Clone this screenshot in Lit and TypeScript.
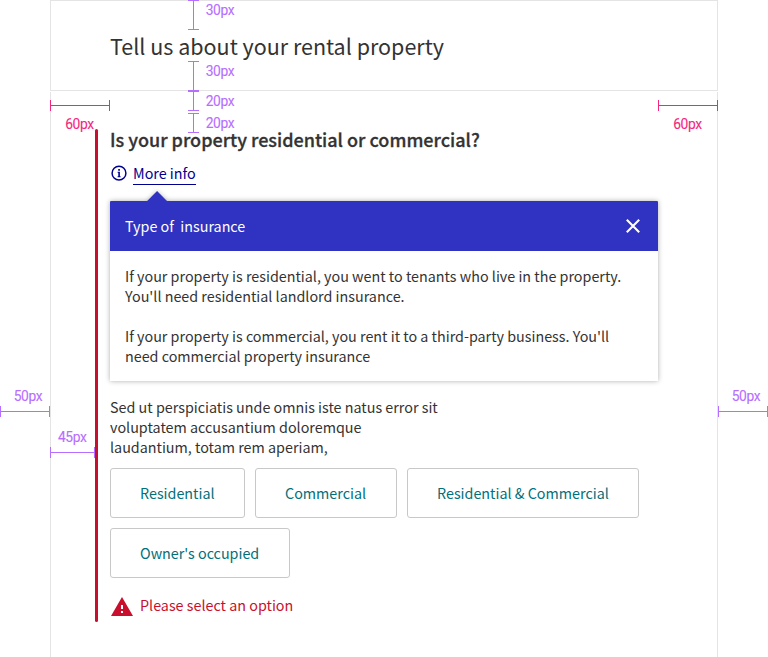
import { LitElement, html, css } from "lit";
import { customElement, property } from "lit/decorators.js";
import { styleMap } from "lit/directives/style-map.js";

type Mark = {
  axis: "h" | "v";
  tone: "violet" | "pink";
  x: number;
  y: number;
  length: number;
  label: string;
  labelX: number;
  labelY: number;
};

/* Spacing annotations laid over the form; x/y is the start of the rule. */
const MARKS: Mark[] = [
  { axis: "v", tone: "violet", x: 193, y: 0, length: 30, label: "30px", labelX: 205.7, labelY: 14 },
  { axis: "v", tone: "violet", x: 193, y: 61, length: 30, label: "30px", labelX: 205.7, labelY: 75 },
  { axis: "v", tone: "violet", x: 193, y: 91, length: 20, label: "20px", labelX: 205.7, labelY: 105 },
  { axis: "v", tone: "violet", x: 193, y: 113, length: 20, label: "20px", labelX: 205.7, labelY: 127 },
  { axis: "h", tone: "pink", x: 50, y: 105, length: 60, label: "60px", labelX: 65.2, labelY: 128 },
  { axis: "h", tone: "pink", x: 658, y: 105, length: 60, label: "60px", labelX: 673.2, labelY: 128 },
  { axis: "h", tone: "violet", x: 0, y: 411, length: 50, label: "50px", labelX: 13.7, labelY: 400 },
  { axis: "h", tone: "violet", x: 718, y: 411, length: 50, label: "50px", labelX: 731.7, labelY: 400 },
  { axis: "h", tone: "violet", x: 50, y: 452, length: 45, label: "45px", labelX: 58, labelY: 441 },
];

@customElement("spacing-mark")
class SpacingMark extends LitElement {
  @property({ attribute: false }) mark!: Mark;

  static styles = css`
    :host { display: contents; }
    .violet { color: #b76eff; }
    .pink { color: #f5267f; }
    .rule, .label { position: absolute; }
    .rule { box-sizing: border-box; }
    .rule::before { content: ""; position: absolute; background: currentColor; }
    .v { width: 11px; border-top: 1px solid; border-bottom: 1px solid; }
    .v::before { left: 5px; top: 0; bottom: 0; width: 1px; }
    .h { height: 11px; border-left: 1px solid; border-right: 1px solid; }
    .h::before { top: 5px; left: 0; right: 0; height: 1px; }
    .label { font: 13.8px/14px Roboto, sans-serif; letter-spacing: -0.4px; white-space: nowrap; -webkit-text-stroke: 0.1px; }
  `;

  render() {
    const m = this.mark;
    const vertical = m.axis === "v";
    const rule = {
      left: `${vertical ? m.x - 5 : m.x}px`,
      top: `${vertical ? m.y : m.y - 5}px`,
      [vertical ? "height" : "width"]: `${m.length}px`,
    };
    return html`
      <div class="rule ${m.axis} ${m.tone}" style=${styleMap(rule)}></div>
      <span class="label ${m.tone}" style=${styleMap({ left: `${m.labelX}px`, top: `${m.labelY - 11}px` })}>${m.label}</span>
    `;
  }
}

@customElement("info-tooltip")
class InfoTooltip extends LitElement {
  static styles = css`
    :host { display: block; }
    .box { position: relative; isolation: isolate; background: #fff; box-shadow: 0 0 5px rgba(0, 0, 0, 0.32); }
    .arrow {
      position: absolute; left: 40.4px; top: -7px; width: 14.2px; height: 14.2px;
      background: #3032c1; transform: rotate(45deg); box-shadow: 0 0 5px rgba(0, 0, 0, 0.25);
    }
    .head {
      position: relative; display: flex; align-items: center; justify-content: space-between;
      height: 50px; box-sizing: border-box; padding: 0 18px 0 15px; background: #3032c1; color: #fff;
      border-radius: 1px 1px 0 0;
    }
    .close { width: 14px; height: 14px; display: block; }
    .body { position: relative; background: #fff; padding: 15px; white-space: nowrap; border-radius: 0 0 1px 1px; }
    p { margin: 0; }
    p + p { margin-top: 20px; }
  `;

  render() {
    return html`
      <div class="box">
        <div class="arrow"></div>
        <div class="head">
          <span>Type of&nbsp; insurance</span>
          <svg class="close" viewBox="0 0 14 14" fill="none" stroke="#fff" stroke-width="2.1">
            <path d="M0.8 0.8L13.2 13.2M13.2 0.8L0.8 13.2" />
          </svg>
        </div>
        <div class="body">
          <p>If your property is residential, you went to tenants who live in the property.<br />You'll need residential landlord insurance.</p>
          <p>If your property is commercial, you rent it to a third-party business. You'll<br />need commercial property insurance</p>
        </div>
      </div>
    `;
  }
}

const OPTIONS = [
  { label: "Residential", width: 135 },
  { label: "Commercial", width: 142 },
  { label: "Residential & Commercial", width: 232 },
  { label: "Owner's occupied", width: 180 },
];

@customElement("app-root")
class AppRoot extends LitElement {
  static styles = css`
    :host {
      display: block; position: relative; height: 657px; overflow: hidden; background: #fff; color: #333;
      font: 14.34px/20px "Noto Sans CJK SC", "Noto Sans", sans-serif;
    }
    .page { margin: 0 50px; height: 657px; display: flex; flex-direction: column; gap: 1px; }
    .top { border: 1px solid #e4e4e4; height: 91px; box-sizing: border-box; padding: 29px 59px; }
    h1 { margin: 0; font-size: 21.5px; line-height: 31px; font-weight: 400; }
    .main {
      flex: 1; box-sizing: border-box; border: solid #e4e4e4; border-width: 0 1px;
      padding: 37px 59px 0 44px;
    }
    .question { display: flex; gap: 12px; height: 493px; }
    .bar { width: 3px; flex: none; background: #c8102e; border-radius: 1.5px; }
    .content { flex: 1; min-width: 0; }
    h2 {
      margin: -2px 0 11px; font-size: 18px; line-height: 25px; font-weight: 500;
      -webkit-text-stroke: 0.3px; white-space: nowrap;
    }
    .more { display: flex; align-items: flex-start; color: #00008f; height: 22px; margin-bottom: 16px; }
    .more svg { width: 18px; height: 20px; margin-right: 5px; flex: none; }
    .link { padding-bottom: 1px; border-bottom: 1px solid; }
    .hint { margin: 16px 0 11px; white-space: nowrap; }
    .options { display: flex; flex-wrap: wrap; gap: 10px; }
    button {
      box-sizing: border-box; height: 50px; padding: 0 0 0 29px; border: 1px solid #c8c8c8; border-radius: 3px;
      background: #fff; color: #00707a; font: inherit; text-align: left; white-space: nowrap;
    }
    .error { display: flex; align-items: flex-start; gap: 6px; margin-top: 17px; color: #c8102e; }
    .error svg { width: 24px; height: 24px; display: block; }
  `;

  render() {
    return html`
      <div class="page">
        <header class="top"><h1>Tell us about your rental property</h1></header>
        <main class="main">
          <section class="question">
            <div class="bar"></div>
            <div class="content">
              <h2>Is your property residential or commercial?</h2>
              <div class="more">
                <svg viewBox="0 0 18 20" fill="none">
                  <circle cx="9" cy="10.2" r="6.9" stroke="currentColor" stroke-width="1.5" />
                  <path d="M8.2 6h1.7v1.7H8.2zM7.6 8.8h2.3v4.4h.7v1H7.6v-1h.7V9.8h-.7z" fill="currentColor" />
                </svg>
                <span class="link">More info</span>
              </div>
              <info-tooltip></info-tooltip>
              <p class="hint">Sed ut perspiciatis unde omnis iste natus error sit<br />voluptatem accusantium doloremque<br />laudantium, totam rem aperiam,</p>
              <div class="options">
                ${OPTIONS.map((o) => html`<button style=${styleMap({ width: `${o.width}px` })}>${o.label}</button>`)}
              </div>
              <div class="error">
                <svg viewBox="0 0 24 24" fill="currentColor">
                  <path d="M1 21h22L12 2 1 21zm12-3h-2v-2h2v2zm0-4h-2v-4h2v4z" />
                </svg>
                <span>Please select an option</span>
              </div>
            </div>
          </section>
        </main>
      </div>
      ${MARKS.map((m) => html`<spacing-mark .mark=${m}></spacing-mark>`)}
    `;
  }
}
